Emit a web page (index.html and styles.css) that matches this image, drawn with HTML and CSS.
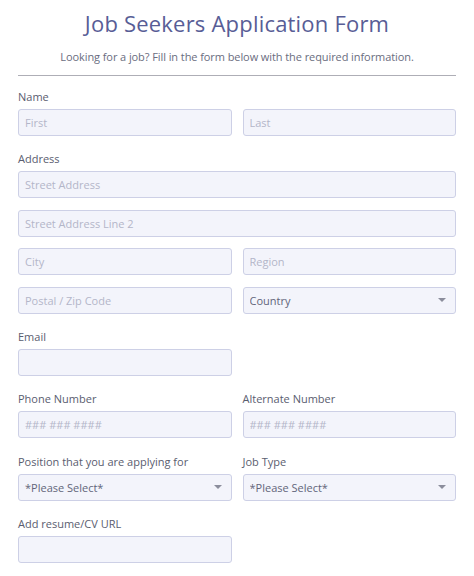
FILE: index.html
```html
<!DOCTYPE html>
<html lang="en">
<head>
<meta charset="utf-8">
<title>Job Seekers Application Form</title>
<link rel="stylesheet" href="styles.css">
</head>
<body>
<form class="form">
  <header class="head">
    <h1 class="title">Job Seekers Application Form</h1>
    <p class="subtitle">Looking for a job? Fill in the form below with the required information.</p>
  </header>
  <hr class="rule">
  <div class="groups">
    <div class="group">
      <label class="label">Name</label>
      <div class="grid">
        <input class="input" placeholder="First">
        <input class="input" placeholder="Last">
      </div>
    </div>
    <div class="group">
      <label class="label">Address</label>
      <div class="grid stack">
        <input class="input wide" placeholder="Street Address">
        <input class="input wide" placeholder="Street Address Line 2">
        <input class="input" placeholder="City">
        <input class="input" placeholder="Region">
        <input class="input" placeholder="Postal / Zip Code">
        <div class="select-wrap"><select class="input select"><option>Country</option></select></div>
      </div>
    </div>
    <div class="group">
      <div class="grid">
        <div class="field">
          <label class="label">Email</label>
          <input class="input">
        </div>
      </div>
    </div>
    <div class="group">
      <div class="grid">
        <div class="field">
          <label class="label">Phone Number</label>
          <input class="input" placeholder="### ### ####">
        </div>
        <div class="field">
          <label class="label">Alternate Number</label>
          <input class="input" placeholder="### ### ####">
        </div>
      </div>
    </div>
    <div class="group">
      <div class="grid">
        <div class="field">
          <label class="label">Position that you are applying for</label>
          <div class="select-wrap"><select class="input select"><option>*Please Select*</option></select></div>
        </div>
        <div class="field">
          <label class="label">Job Type</label>
          <div class="select-wrap"><select class="input select"><option>*Please Select*</option></select></div>
        </div>
      </div>
    </div>
    <div class="group">
      <div class="grid">
        <div class="field">
          <label class="label">Add resume/CV URL</label>
          <input class="input">
        </div>
      </div>
    </div>
  </div>
</form>
</body>
</html>
```
FILE: styles.css
```css
* { box-sizing: border-box; }
html, body { margin: 0; padding: 0; background: #ffffff; }
body {
  font-family: "Open Sans", "DejaVu Sans", sans-serif;
  color: #565a6c;
}
.form {
  padding: 9px 18px 0 18px;
}
.head { text-align: center; }
.title {
  margin: 0;
  font-size: 22px;
  line-height: 28px;
  font-weight: 400;
  color: #585d96;
  letter-spacing: 0.2px;
}
.subtitle {
  margin: 12px 0 0 0;
  font-size: 11px;
  line-height: 16px;
  color: #6a6d80;
  letter-spacing: -0.08px;
}
.rule {
  margin: 10px 0 0 0;
  border: 0;
  border-top: 1px solid #aeaeb6;
  height: 0;
}
.groups {
  display: flex;
  flex-direction: column;
  gap: 16.3px;
  padding-top: 14px;
}
.group { display: flex; flex-direction: column; }
.field { display: flex; flex-direction: column; }
.label {
  display: block;
  font-size: 11px;
  line-height: 14px;
  margin-bottom: 5px;
  color: #5a5d6f;
}
.grid {
  display: grid;
  grid-template-columns: 1fr 1fr;
  column-gap: 11px;
}
.stack { row-gap: 11.5px; }
.wide { grid-column: 1 / span 2; }
.input {
  display: block;
  width: 100%;
  height: 27px;
  margin: 0;
  padding: 0 6px;
  border: 1px solid #cdd0e6;
  border-radius: 3px;
  background: #f3f4fb;
  font-family: inherit;
  font-size: 11px;
  color: #62657a;
  outline: none;
}
.input::placeholder { color: #b3b6c9; }
.select-wrap { position: relative; }
.select {
  -webkit-appearance: none;
  appearance: none;
  color: #62657a;
}
.select-wrap::after {
  content: "";
  position: absolute;
  right: 10px;
  top: 11px;
  border-left: 4px solid transparent;
  border-right: 4px solid transparent;
  border-top: 4px solid #8b8d9c;
  pointer-events: none;
}
```
